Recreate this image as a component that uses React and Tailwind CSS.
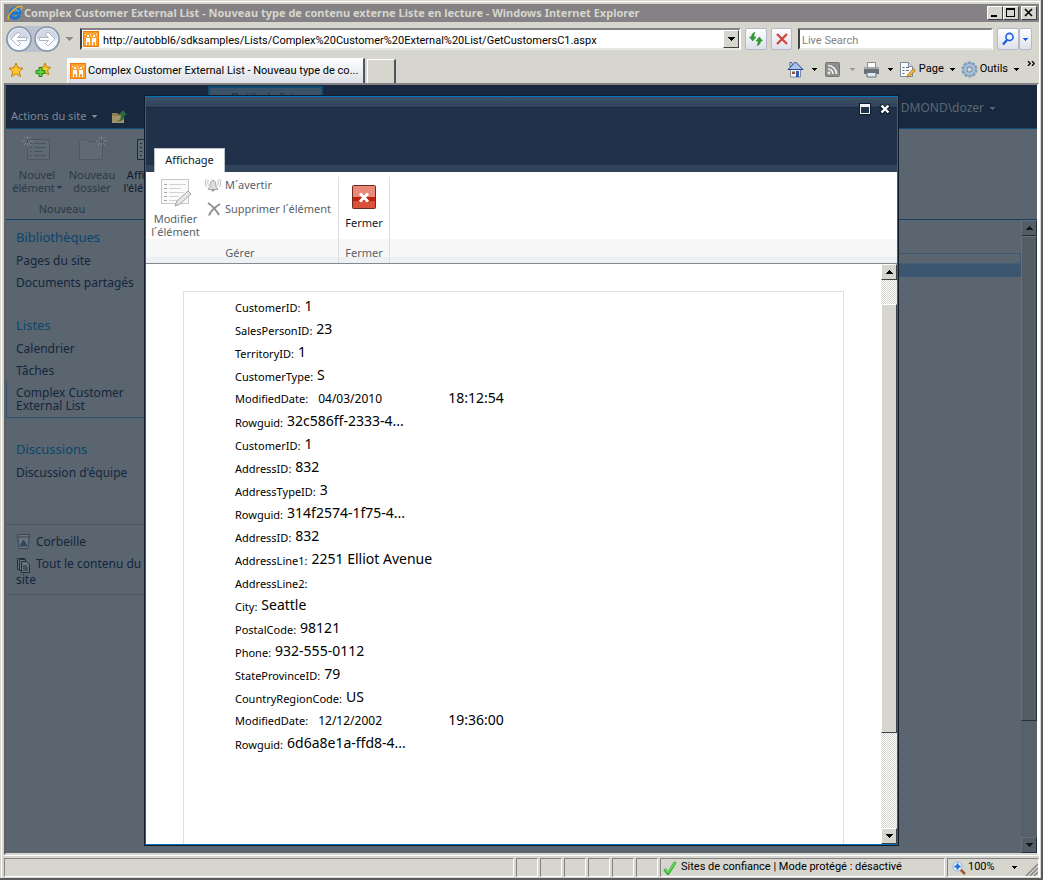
const sections = [
  { title: 'Bibliothèques', links: ['Pages du site', 'Documents partagés'] },
  { title: 'Listes', links: ['Calendrier', 'Tâches', 'Complex Customer External List'] },
  { title: 'Discussions', links: ["Discussion d'équipe"] },
];

const fields = [
  ['CustomerID', '1'],
  ['SalesPersonID', '23'],
  ['TerritoryID', '1'],
  ['CustomerType', 'S'],
  ['ModifiedDate', '04/03/2010', '18:12:54'],
  ['Rowguid', '32c586ff-2333-4...'],
  ['CustomerID', '1'],
  ['AddressID', '832'],
  ['AddressTypeID', '3'],
  ['Rowguid', '314f2574-1f75-4...'],
  ['AddressID', '832'],
  ['AddressLine1', '2251 Elliot Avenue'],
  ['AddressLine2', ''],
  ['City', 'Seattle'],
  ['PostalCode', '98121'],
  ['Phone', '932-555-0112'],
  ['StateProvinceID', '79'],
  ['CountryRegionCode', 'US'],
  ['ModifiedDate', '12/12/2002', '19:36:00'],
  ['Rowguid', '6d6a8e1a-ffd8-4...'],
];

function Arrow({ up, wide, className = '' }) {
  if (wide) {
    return (
      <svg className={`w-[7px] h-1 shrink-0 ${className}`} viewBox="0 0 7 4" fill="currentColor" shapeRendering="crispEdges">
        <path d={up ? 'M3 0h1v1h1v1h1v1h1v1H0V3h1V2h1V1h1z' : 'M0 0h7v1H6v1H5v1H4v1H3V3H2V2H1V1H0z'} />
      </svg>
    );
  }
  return (
    <svg className={`w-[5px] h-[3px] shrink-0 ${className}`} viewBox="0 0 5 3" fill="currentColor" shapeRendering="crispEdges">
      <path d="M0 0h5v1H4v1H3v1H2V2H1V1H0z" />
    </svg>
  );
}

function IeLogo() {
  return (
    <svg className="w-4 h-4 shrink-0" viewBox="0 0 16 16" fill="none">
      <path d="M12.6 10.4A4.9 4.9 0 1 1 13 8.2H4" stroke="#1477d4" strokeWidth="2.8" />
      <path d="M11.8 7A4 4 0 0 0 4.6 6" stroke="#7cc8f8" strokeWidth="1" />
      <path d="M1.6 14.8C-.2 13 3 7 8 3.6 11.600 1 15 .4 15 2.400c0 .9-.4 1.700-1 2.600" stroke="#f0b323" strokeWidth="1.300" />
    </svg>
  );
}

function SiteIcon() {
  return (
    <svg className="w-4 h-4 shrink-0" viewBox="0 0 16 16" shapeRendering="crispEdges">
      <rect width="16" height="16" rx="1" fill="#f07c10" />
      <rect x="1" y="1" width="14" height="14" fill="#fba02e" />
      <path d="M3 7h4v7H6v-3H4v3H3zM9 7h4v7h-1v-3h-2v3H9z" fill="#fff" />
      <path d="M4 4h2v2H4zM10 4h2v2h-2zM7 3h1v1H7zM13 3h1v1h-1zM2 3h1v1H2zM8 5h1v1H8z" fill="#fff" />
    </svg>
  );
}

function NavCircle({ label, flip }) {
  return (
    <button type="button" aria-label={label} className="w-[26px] h-[26px]">
      <svg className="w-[26px] h-[26px]" viewBox="0 0 26 26">
        <circle cx="13" cy="13" r="12" fill="#eceff5" stroke="#7f93ad" strokeWidth="1.500" />
        <path d="M2.500 13a10.500 10.500 0 0 1 21 0z" fill="#d3d9e4" />
        <path d="M3 14a10 10 0 0 0 20 0c-6 2-14 2-20 0z" fill="#f7faff" />
        <path
          d={flip ? 'M21 13l-7-7-2.500 2.500 3 3H5.500v3h9l-3 3L14 20z' : 'M5 13l7-7 2.500 2.500-3 3h9v3h-9l3 3L12 20z'}
          fill="#fff"
          stroke="#9aa6b8"
          strokeWidth=".8"
        />
      </svg>
    </button>
  );
}

function WindowButton({ label, children }) {
  return (
    <button
      type="button"
      aria-label={label}
      className="w-4 h-3.5 bg-[#d6d6ce] border border-t-white border-l-white border-r-[#424142] border-b-[#424142] flex items-center justify-center"
    >
      <svg className="w-3 h-2.5" viewBox="0 0 12 10" fill="none" stroke="#000" shapeRendering="crispEdges">
        {children}
      </svg>
    </button>
  );
}

function TitleBar() {
  return (
    <header className="h-[18px] shrink-0 bg-[#848284] flex items-center gap-px pl-[3px] pr-0.5">
      <IeLogo />
      <h1 className="flex-1 min-w-0 truncate text-[11px] leading-4 font-bold font-['Noto_Sans',sans-serif] text-[#d6d6ce]">
        Complex Customer External List - Nouveau type de contenu externe Liste en lecture - Windows Internet Explorer
      </h1>
      <div className="flex">
        <WindowButton label="Réduire">
          <path d="M2 8h6" strokeWidth="2" />
        </WindowButton>
        <WindowButton label="Agrandir">
          <path d="M1.500 2v6.500h8V2" />
          <path d="M1 1h9" strokeWidth="2" />
        </WindowButton>
        <span className="w-0.5" />
        <WindowButton label="Fermer la fenêtre">
          <path d="M2 1l7 7M9 1L2 8" strokeWidth="1.600" shapeRendering="auto" />
        </WindowButton>
      </div>
    </header>
  );
}

function ToolButton({ label, className = '', children }) {
  return (
    <button
      type="button"
      aria-label={label}
      className={`h-[22px] rounded-xs border border-[#b5bac6] bg-linear-to-b from-[#fdfdfe] to-[#dfe2ec] flex items-center justify-center ${className}`}
    >
      {children}
    </button>
  );
}

function AddressRow() {
  return (
    <div className="h-[34px] shrink-0 flex items-center pl-0.5 pr-[7px]">
      <div className="flex gap-0.5 rounded-full bg-[#bcc2cc]">
        <NavCircle label="Précédent" />
        <NavCircle label="Suivant" flip />
      </div>
      <Arrow wide className="mx-1.5 text-[#8a8a86]" />
      <div className="flex-1 min-w-0 h-[22px] ml-px bg-white border-2 border-t-[#848284] border-l-[#424142] border-r-white border-b-[#e8e8e2] flex items-center gap-1 pl-px">
        <SiteIcon />
        <input
          aria-label="Adresse"
          className="flex-1 min-w-0 h-[18px] pt-0.5 text-[11px] text-black outline-none"
          defaultValue="http://autobbl6/sdksamples/Lists/Complex%20Customer%20External%20List/GetCustomersC1.aspx"
        />
        <button
          type="button"
          aria-label="Afficher les adresses"
          className="w-4 h-[18px] bg-[#d6d6ce] border border-t-white border-l-white border-r-[#424142] border-b-[#424142] flex items-center justify-center"
        >
          <Arrow wide />
        </button>
      </div>
      <ToolButton label="Actualiser" className="w-[22px] ml-1">
        <svg className="w-4 h-4" viewBox="0 0 16 16" fill="#2f9e2f" stroke="#1d7a1d" strokeWidth=".5">
          <path d="M7 1.500C4.500 2 3.500 3.500 3.500 6H1.500l3.200 4L8 6H6c-.2-2 .2-3.200 1-4.500z" />
          <path d="M9 14.500c2.500-.5 3.500-2 3.500-4.500h2l-3.200-4L8 10h2c.2 2-.2 3.200-1 4.500z" />
        </svg>
      </ToolButton>
      <ToolButton label="Arrêter" className="w-[21px] ml-1">
        <svg className="w-3.5 h-3.5" viewBox="0 0 14 14" fill="none" stroke="#cf4740" strokeWidth="2.400">
          <path d="M2 2l10 10M12 2L2 12" />
        </svg>
      </ToolButton>
      <input
        type="search"
        aria-label="Live Search"
        placeholder="Live Search"
        className="w-[195px] h-[22px] ml-1.5 pl-0.5 pt-0.5 text-[11px] bg-white border-2 border-t-[#848284] border-l-[#424142] border-r-white border-b-[#e8e8e2] placeholder:text-[#848284] outline-none"
      />
      <ToolButton label="Rechercher" className="w-[22px] ml-1">
        <svg className="w-3.5 h-3.5" viewBox="0 0 14 14" fill="none" stroke="#1b5fe0">
          <circle cx="8.500" cy="5" r="3.600" strokeWidth="1.600" fill="#eef4ff" />
          <path d="M6 8l-4 4.500" strokeWidth="2.400" />
        </svg>
      </ToolButton>
      <ToolButton label="Options de recherche" className="w-[13px]">
        <Arrow className="text-[#1b5fe0]" />
      </ToolButton>
    </div>
  );
}

function CommandRow() {
  return (
    <div className="h-[27px] shrink-0 flex items-center pr-1">
      <button type="button" aria-label="Favoris" className="ml-1">
        <svg className="w-4 h-4" viewBox="0 0 16 16" fill="#fdc834" stroke="#c67c0a">
          <path d="M8 1l2 4.800 5 .4-3.800 3.300 1.300 5L8 11.800l-4.500 2.700 1.300-5L1 6.200l5-.4z" />
        </svg>
      </button>
      <button type="button" aria-label="Ajouter aux Favoris" className="ml-[11px]">
        <svg className="w-4 h-4" viewBox="0 0 16 16">
          <path d="M10 1l1.600 4 4 .4-3 2.800 1 4.600L10 10.500l-3.500 2.300 1-4.600-3-2.800 4-.4z" fill="#fdc834" stroke="#c67c0a" />
          <path d="M4 5.500h3v3h3v3H7v3H4v-3H1v-3h3z" fill="#5fd13a" stroke="#1f8a1b" />
        </svg>
      </button>
      <div role="tab" className="self-end w-[298px] h-[25px] ml-4 pl-0.5 bg-linear-to-b from-white to-[#dcdfe6] border-t border-l border-white border-r-2 border-r-[#4a5560] flex items-center gap-0.5">
        <SiteIcon />
        <span className="truncate text-[11px]">Complex Customer External List - Nouveau type de co...</span>
      </div>
      <button
        type="button"
        aria-label="Nouvel onglet"
        className="self-end w-[29px] h-6 ml-0.5 border-t border-l border-t-white border-l-white border-r-2 border-r-[#4a5560]"
      />
      <div className="flex-1" />
      <div className="flex items-center text-[11px] text-black">
        <button type="button" aria-label="Accueil" className="flex items-center gap-2">
          <svg className="w-[17px] h-[17px]" viewBox="0 0 17 17">
            <path d="M3.500 8.500h10v7.500h-10z" fill="#f2f4f8" stroke="#7b8aa0" />
            <path d="M3 1.500h2v4H3z" fill="#fff" stroke="#24458c" strokeWidth=".8" />
            <path d="M8.500 1L16 8.500H1z" fill="#a9c2ee" stroke="#24458c" />
            <path d="M9 10h3v6H9z" fill="#2d5bb5" />
            <path d="M5 10.500h3V13H5z" fill="#a04a2a" />
          </svg>
          <Arrow />
        </button>
        <button type="button" aria-label="Flux" className="flex items-center gap-2.5 ml-2">
          <svg className="w-[15px] h-[15px]" viewBox="0 0 15 15" fill="none" stroke="#f2f2f0" strokeWidth="1.700">
            <rect x=".5" y=".5" width="14" height="14" rx="1" fill="#8e8e8c" stroke="#777" strokeWidth="1" />
            <path d="M3 7a5 5 0 0 1 5 5M3 3.500A8.500 8.500 0 0 1 11.500 12" />
            <circle cx="4" cy="11" r=".6" />
          </svg>
          <Arrow className="text-[#9a9a94]" />
        </button>
        <button type="button" aria-label="Imprimer" className="flex items-center gap-2 ml-2">
          <svg className="w-[17px] h-[17px]" viewBox="0 0 17 17">
            <path d="M4.500 1.500h8V7h-8z" fill="#fff" stroke="#8a8a8a" />
            <path d="M1 6.500h15V13H1z" fill="#6c7076" />
            <path d="M1 6.500h15V8H1z" fill="#a9adb3" />
            <path d="M4 11.500h9V16H4z" fill="#dfe9f5" stroke="#5f6e80" />
          </svg>
          <Arrow />
        </button>
        <button type="button" className="flex items-center ml-1.5">
          <svg className="w-[18px] h-[17px]" viewBox="0 0 18 17">
            <path d="M1.500 1.500h8l4 4v10h-12z" fill="#fafbfd" stroke="#7d8899" />
            <path d="M9.500 1.500v4h4" fill="#dfe4ec" stroke="#7d8899" />
            <path d="M3.500 6.500h2M7 6.500h3M3.500 9.500h2M7 9.500h3M3.500 12.500h2" stroke="#56657a" />
            <path d="M8.500 14l6-6.500 2 2-6 6-2.500.5z" fill="#efb440" stroke="#96631a" strokeWidth=".7" />
          </svg>
          <span className="ml-0.5 mr-1.5">Page</span>
          <Arrow />
        </button>
        <button type="button" className="flex items-center ml-1.5">
          <svg className="w-[17px] h-[17px]" viewBox="0 0 16 16" fill="none">
            <circle cx="8" cy="8" r="6.600" stroke="#7f9dbd" strokeWidth="2" strokeDasharray="3 1.147" />
            <circle cx="8" cy="8" r="4.500" fill="#e6eef7" stroke="#a9c3de" strokeWidth="3" />
            <circle cx="8" cy="8" r="5.700" stroke="#6685a6" strokeWidth=".6" />
            <circle cx="8" cy="8" r="2.500" fill="#d6d6ce" stroke="#6d8aa8" />
          </svg>
          <span className="ml-0.5 mr-1.5">Outils</span>
          <Arrow />
        </button>
        <button type="button" aria-label="Plus d'outils" className="self-start ml-2">
          <svg className="w-2 h-[5px]" viewBox="0 0 8 5" fill="none" stroke="#000" strokeWidth="1.300">
            <path d="M1 0l2.200 2.500L1 5M5 0l2.200 2.500L5 5" />
          </svg>
        </button>
      </div>
    </div>
  );
}

function RibbonIcon({ folder, active }) {
  const line = active ? '#152a4a' : '#47535f';
  return (
    <svg className="w-8 h-8" viewBox="0 0 32 32" fill="none" stroke={line}>
      {folder ? (
        <path d="M3.500 26.500v-18l2-2h5l2 2h14v18z" fill="#606a75" stroke="#4e5964" />
      ) : (
        <>
          <path d="M6.500 6.500h22v20h-22z" fill="#5e6974" stroke={active ? '#152a4a' : '#4a5560'} />
          <path d="M13 10.500h12M13 14.500h12M13 18.500h9M13 22.500h12M9 10.500h2M9 14.500h2M9 18.500h2M9 22.500h2" />
        </>
      )}
      {!active && (
        <path
          d={folder ? 'M25.500 3v3M25.500 10v3M20 8h3M28 8h3M22 4l2 2M29 4l-2 2M22 12l2-2M29 12l-2-2' : 'M6.500 3v3M6.500 10v3M1 8h3M9 8h3M3 4l2 2M10 4L8 6M3 12l2-2M10 12l-2-2'}
          stroke="#7a848e"
        />
      )}
    </svg>
  );
}

function ScrollBar({ dim, className = '' }) {
  const button = dim
    ? 'bg-[#545c66] border-t-[#66707a] border-l-[#66707a] border-r-[#232f3d] border-b-[#232f3d] text-[#0c1724]'
    : 'bg-[#d6d6ce] border-t-white border-l-white border-r-[#424142] border-b-[#424142] text-black';
  const track = dim
    ? 'bg-[repeating-conic-gradient(#545c66_0_25%,#5a6570_0_50%)]'
    : 'bg-[repeating-conic-gradient(#d6d6ce_0_25%,#ffffff_0_50%)]';
  return (
    <div className={`w-4 shrink-0 flex flex-col bg-size-[2px_2px] ${track} ${className}`}>
      <button type="button" aria-label="Défiler vers le haut" className={`h-4 border flex items-center justify-center ${button}`}>
        <Arrow wide up />
      </button>
      <div className={dim ? 'h-0' : 'h-6'} />
      <div className={`border ${button} ${dim ? 'grow-5' : 'grow-9'}`} />
      <div className={dim ? 'grow-[1.2]' : 'grow-2'} />
      <button type="button" aria-label="Défiler vers le bas" className={`h-4 border flex items-center justify-center ${button}`}>
        <Arrow wide />
      </button>
    </div>
  );
}

function SideNav() {
  return (
    <nav className="w-[155px] shrink-0 pt-[7px] text-[12px] leading-[13px] text-[#14253c]">
      {sections.map((section) => (
        <div key={section.title} className="mb-[22px]">
          <h2 className="pl-2.5 mb-0.5 text-[13px] leading-5 text-[#0b456c]">{section.title}</h2>
          <ul>
            {section.links.map((link) => {
              const current = link.startsWith('Complex');
              return (
                <li
                  key={link}
                  className={`py-[5px] mb-[-1px] ${current ? 'pl-[9px] border-l border-b border-[#2f5377]' : 'pl-2.5'}`}
                >
                  <a href="#" className="block w-[125px]">{link}</a>
                </li>
              );
            })}
          </ul>
        </div>
      ))}
      <div className="mt-[41px] py-2 pl-2.5 border-y border-[#4b5661]">
        <a href="#" className="flex items-center gap-1 h-4">
          <svg className="w-4 h-4" viewBox="0 0 16 16" fill="none" stroke="#3a4653">
            <path d="M1.500 1.500h12l-1.500 14H3z" fill="#6a747e" />
            <path d="M1 4h13" />
            <path d="M7.500 7l3.500 6H4z" fill="#27496b" />
          </svg>
          Corbeille
        </a>
        <a href="#" className="block w-[130px] mt-2">
          <svg className="inline w-4 h-4 mr-1 align-middle" viewBox="0 0 16 16" fill="#6a747e" stroke="#1f2d40">
            <path d="M1.500 1.500h7v11h-7z" />
            <path d="M3.500 2.500h6v11h-6z" />
            <path d="M5.500 4.500h5l3 3v8h-8z" />
            <path d="M7 9h4M7 11h5M7 13h5" />
          </svg>
          Tout le contenu du site
        </a>
      </div>
    </nav>
  );
}

// The SharePoint page behind the dialog, in its dimmed colours.
function DimmedPage() {
  return (
    <div className="flex-1 flex flex-col min-w-0 bg-[#5a6570] text-[11px]">
      <div className="h-11 shrink-0 bg-[#18283e] border-b border-[#0f4c75] flex text-[#7d8794]">
        <div className="w-[202px] pt-[19px] pl-[5px] flex items-start">
          <button type="button" className="h-6 flex items-center gap-1.5">
            Actions du site
            <Arrow />
          </button>
          <button type="button" aria-label="Remonter" className="mt-1 ml-3.5">
            <svg className="w-4 h-4" viewBox="0 0 16 16">
              <path d="M1 5h5l1 1h6v9H1z" fill="#8d7f55" />
              <path d="M1 8h12v7H1z" fill="#a09468" />
              <path d="M5 13c4 0 5-2 5-6H7.500L12 2l4 5h-2.500c0 5-3 7-8.500 6z" fill="#2d6b3c" />
            </svg>
          </button>
        </div>
        <div className="mt-px w-[115px] h-full bg-[#3b5268] border-2 border-b-0 border-[#0f4c75] text-center text-[#18283e] leading-[18px]">
          Outils de liste
        </div>
        <div className="flex-1" />
        <button type="button" className="h-6 mt-[11px] mr-[42px] flex items-center gap-1.5 text-[12px] text-[#5c6875]">
          DMOND\dozer
          <Arrow />
        </button>
      </div>

      <div className="h-[91px] shrink-0 border-b border-[#0f4066] flex flex-col text-[#2b3947]">
        <div className="flex h-[72px] pt-1 leading-[13px]">
          <button type="button" className="w-[62px] flex flex-col items-center gap-[3px]">
            <RibbonIcon />
            <span>
              Nouvel
              <br />
              <span className="flex items-center gap-0.5">
                élément
                <Arrow />
              </span>
            </span>
          </button>
          <button type="button" className="w-12 flex flex-col items-center gap-[3px]">
            <RibbonIcon folder />
            <span>Nouveau dossier</span>
          </button>
          <button type="button" className="w-[62px] flex flex-col items-center gap-[3px] text-[#0f1a29]">
            <RibbonIcon active />
            <span>Afficher l'élément</span>
          </button>
        </div>
        <div className="w-28 text-center leading-4">Nouveau</div>
      </div>

      <div className="flex-1 min-h-0 flex">
        <SideNav />
        <div className="flex-1 pt-[33px]">
          <div className="h-6 border border-l-0 border-[#3a5673] pt-[9px]">
            <div className="h-[13px] bg-[#3d5670] border-t border-dotted border-[#5a6570]" />
          </div>
        </div>
        <ScrollBar dim />
      </div>
    </div>
  );
}

function Dialog() {
  return (
    <section role="dialog" aria-label="Affichage" className="w-full max-w-[755px] flex flex-col border border-[#101c2b] bg-white">
      <div className="flex-1 min-h-0 flex flex-col border border-[#0072bc]">
        <div className="h-[75px] shrink-0 flex flex-col bg-[#21314a]">
          <div className="h-6 flex justify-end items-center gap-2 pr-1.5 bg-[linear-gradient(#3b5066_0,#2f445a_10px,#1a2940_10px,#1a2940_11px,#21314a_11px)]">
            <button type="button" aria-label="Agrandir la boîte">
              <svg className="w-3 h-3" viewBox="0 0 12 12" shapeRendering="crispEdges">
                <path d="M0 0h12v12H0z" fill="#101c2b" />
                <path d="M1 1h10v10H1z" fill="#f2f2f2" />
                <path d="M2 4h8v6H2z" fill="#21314a" />
              </svg>
            </button>
            <button type="button" aria-label="Fermer la boîte">
              <svg className="w-3 h-3" viewBox="0 0 12 12" fill="none">
                <path d="M1.500 2l9 8.500M10.500 2l-9 8.500" stroke="#101c2b" strokeWidth="4" />
                <path d="M2.500 2.500l7 7M9.500 2.500l-7 7" stroke="#fff" strokeWidth="2.400" />
              </svg>
            </button>
          </div>
          <div className="flex-1 flex items-end bg-[linear-gradient(to_top,#2f435a_7px,#21314a_7px)] pl-2">
            <button type="button" role="tab" className="w-[71px] h-6 border border-b-0 border-[#b9c3c9] bg-white text-[11px] text-[#0f1a29]">
              Affichage
            </button>
          </div>
        </div>

        <div className="h-[92px] shrink-0 flex border-b border-[#83898f] bg-[linear-gradient(to_top,#edf1f3_6px,#f7f7f7_6px,#f7f7f7_24px,#ffffff_24px)] text-[11px] text-[#5b6167]">
          <div className="w-[193px] mt-[5px] border-r border-[#dcdfe1] flex flex-col">
            <div className="flex-1 flex">
              <button type="button" className="w-[59px] flex flex-col items-center gap-[3px] leading-[13px]">
                <svg className="w-8 h-8" viewBox="0 0 32 32" fill="none">
                  <path d="M1.500 2.500h27v24h-27z" fill="#fbfbfb" stroke="#c5c7c4" />
                  <path d="M9 7.500h17M9 11.500h12M9 15.500h15M9 19.500h10M9 23.500h8" stroke="#d2d4da" />
                  <path d="M4 7.500h3M4 11.500h3M4 15.500h3M4 19.500h3M4 23.500h3" stroke="#a5a8ac" />
                  <path d="M15 29l2-5 11-10 3 3-11 10z" fill="#e6e6e4" stroke="#a0a0a0" />
                </svg>
                <span>
                  Modifier
                  <br />
                  l´élément
                </span>
              </button>
              <div className="flex flex-col">
                <button type="button" className="h-4 mb-2 flex items-center gap-1">
                  <svg className="w-4 h-4" viewBox="0 0 16 16" fill="none" stroke="#bcbcbc">
                    <path d="M4 11c1.500-1 1-5 2-6.500 1-1.300 3-1.300 4 0C11 6 10.500 10 12 11l1 1.500H3z" fill="#dedede" stroke="#a8a8a8" />
                    <path d="M6.500 13.500h3" stroke="#8f8f8f" strokeWidth="1.500" />
                    <path d="M3.500 3c-1 1.500-1 4 0 5.500M1.500 2C0 4.500 0 7.500 1.500 10M12.500 3c1 1.500 1 4 0 5.500M14.500 2c1.500 2.500 1.500 5.500 0 8" />
                  </svg>
                  M´avertir
                </button>
                <button type="button" className="h-4 flex items-center gap-1">
                  <svg className="w-4 h-4" viewBox="0 0 16 16" fill="none" stroke="#8f8f8f" strokeWidth="2">
                    <path d="M3 2c5 3 8 7 11 12M15 3C10 6 6 9 4 14.500" />
                  </svg>
                  Supprimer l´élément
                </button>
              </div>
            </div>
            <div className="h-5 text-center leading-5">
              <span className="pr-1">Gérer</span>
            </div>
          </div>
          <div className="w-[51px] mt-[5px] border-r border-[#dcdfe1] flex flex-col">
            <button type="button" className="flex-1 flex flex-col items-center gap-[7px] leading-[13px] text-[#0f1a29]">
              <svg className="w-6 h-6 mt-2" viewBox="0 0 24 24">
                <rect x=".5" y=".5" width="23" height="23" rx="1" fill="#c8301c" stroke="#6e2a20" />
                <path d="M1 1h22v11H1z" fill="#e8897c" />
                <path d="M1 12h22v4H1z" fill="#c21f0c" />
                <path d="M1 16h22v7H1z" fill="#d9503a" />
                <path d="M8 8.500l8 8M16 8.500l-8 8" stroke="#fff" strokeWidth="3" />
              </svg>
              Fermer
            </button>
            <div className="h-5 text-center leading-5">Fermer</div>
          </div>
        </div>

        <div className="flex-1 min-h-0 flex">
          <div className="flex-1 min-w-0 overflow-hidden pt-[27px] px-[37px] flex">
            <dl className="flex-1 border border-b-0 border-[#dfdfdf] pt-[5px] pl-[51px] text-black">
              {fields.map(([name, value, time], i) => (
                <div key={i} className="h-[23px] flex items-start gap-1">
                  <dt className={`text-[11px] leading-4 whitespace-nowrap ${time ? 'pt-0.5' : 'pt-[3px]'}`}>{name}:</dt>
                  {time ? (
                    <>
                      <dd className="w-[132px] pl-1.5 pt-0.5 text-[12px] leading-4">{value}</dd>
                      <dd className="text-sm leading-[18px]">{time}</dd>
                    </>
                  ) : (
                    <dd className="text-sm leading-[18px]">{value}</dd>
                  )}
                </div>
              ))}
            </dl>
          </div>
          <ScrollBar />
        </div>
      </div>
    </section>
  );
}

function StatusPanel({ className = '', children }) {
  return (
    <div className={`h-[19px] border border-t-[#848284] border-l-[#848284] border-r-white border-b-white flex items-center ${className}`}>
      {children}
    </div>
  );
}

function StatusBar() {
  return (
    <footer className="h-[22px] shrink-0 border-t border-white flex items-end gap-0.5 text-[11px] text-black">
      <StatusPanel className="flex-1" />
      {[0, 1, 2, 3, 4, 5].map((n) => (
        <StatusPanel key={n} className="w-[22px]" />
      ))}
      <StatusPanel className="w-[285px] pl-0.5 gap-1">
        <svg className="w-3.5 h-3.5" viewBox="0 0 14 14" fill="none">
          <path d="M1.500 8l3.500 4.500L12.500 1" stroke="#2fa82f" strokeWidth="3" />
          <path d="M1.800 8l3.200 3.500L12.300 1.500" stroke="#6fe05a" strokeWidth="1.300" />
        </svg>
        <span className="whitespace-nowrap">Sites de confiance | Mode protégé : désactivé</span>
      </StatusPanel>
      <StatusPanel className="w-[92px] pl-1">
        <button type="button" className="flex items-center flex-1">
          <svg className="w-3.5 h-3.5" viewBox="0 0 14 14" fill="none">
            <path d="M8.500 8.500l4.500 4.500" stroke="#a0572a" strokeWidth="2.500" />
            <circle cx="5.500" cy="5.500" r="4.600" fill="#eaf5ff" stroke="#8fb4d8" />
            <path d="M5.500 2.500v6M2.500 5.500h6" stroke="#1566d8" strokeWidth="2" />
          </svg>
          <span className="flex-1 text-left pl-0.5">100%</span>
          <Arrow />
        </button>
        <svg className="w-[13px] h-[13px] ml-2 self-end" viewBox="0 0 13 13" stroke="#848284" strokeWidth="1.500">
          <path d="M1 13L13 1M5 13l8-8M9 13l4-4" />
        </svg>
      </StatusPanel>
    </footer>
  );
}

export default function App() {
  return (
    <div className="h-screen min-h-[600px] flex flex-col bg-[#d6d6ce] font-[Roboto,'Liberation_Sans',sans-serif] border-r-2 border-b-2 border-[#5a5a5a] overflow-hidden">
      <div className="flex-1 min-h-0 flex flex-col m-px mb-0 border border-b-0 border-white p-0.5 pr-0 pb-px">
        <TitleBar />
        <AddressRow />
        <CommandRow />
        <main className="relative flex-1 min-h-0 flex border-2 border-t-[#848284] border-l-[#5f5f5f] border-r-white border-b-[#d6d6ce] font-['Noto_Sans',sans-serif]">
          <DimmedPage />
          <div className="absolute inset-0 flex justify-center pt-2.5 pb-[7px]">
            <Dialog />
          </div>
        </main>
        <StatusBar />
      </div>
    </div>
  );
}
